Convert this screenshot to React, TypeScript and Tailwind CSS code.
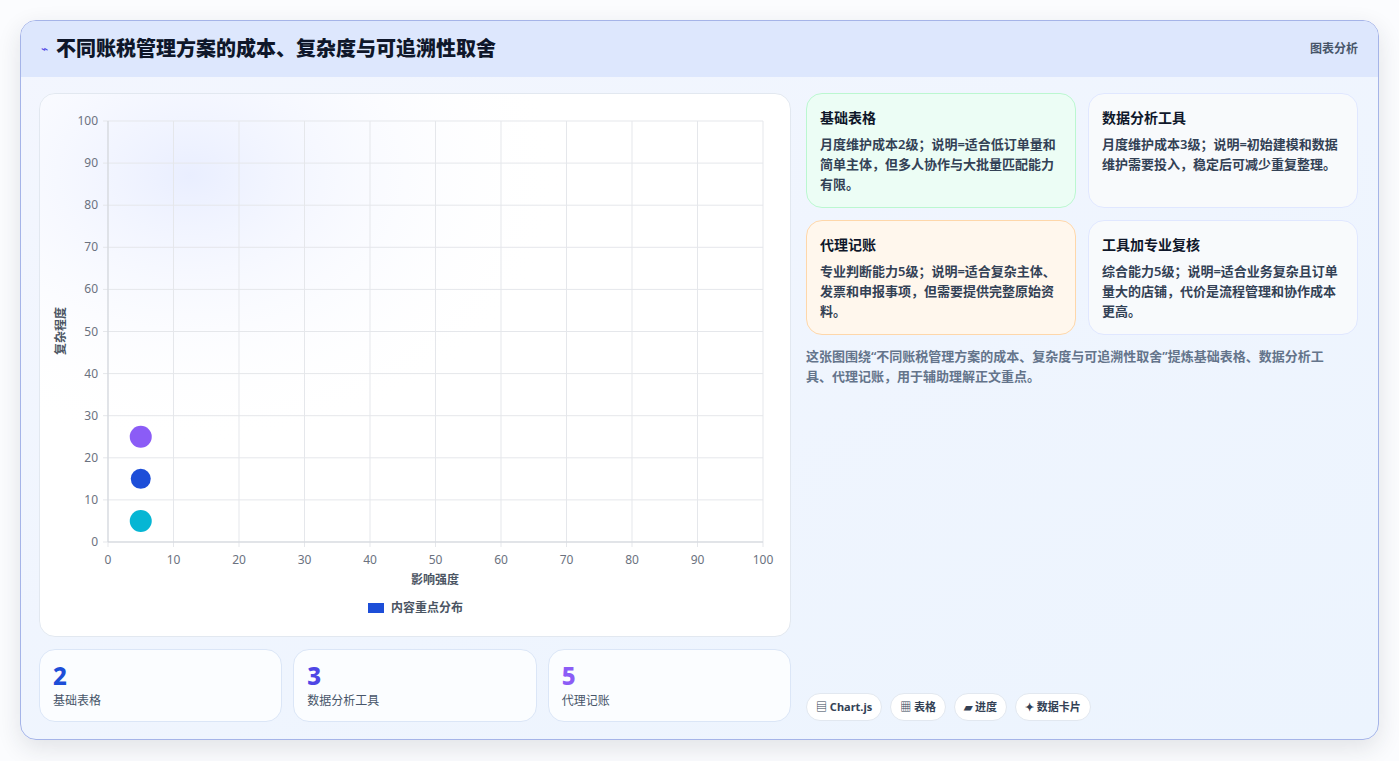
const font = { fontFamily: '"Noto Sans", "Noto Sans CJK SC", sans-serif' };

const ticks = [0, 10, 20, 30, 40, 50, 60, 70, 80, 90, 100];
// plot area in card coordinates
const L = 68, T = 27, W = 655, H = 421;
const px = (v: number) => L + (v / 100) * W;
const py = (v: number) => T + H - (v / 100) * H;

const points = [
  { x: 5, y: 25, r: 11, c: "#8b5cf6" },
  { x: 5, y: 15, r: 10, c: "#1d4ed8" },
  { x: 5, y: 5, r: 11, c: "#06b6d4" },
];

function Chart() {
  return (
    <svg width="750" height="543" viewBox="0 0 750 543" className="block">
      <defs>
        <radialGradient id="glow" cx="0.2" cy="0.15" r="0.5">
          <stop offset="0" stopColor="#e0e7ff" stopOpacity="0.7" />
          <stop offset="1" stopColor="#ffffff" stopOpacity="0" />
        </radialGradient>
      </defs>
      <rect x="0" y="0" width="750" height="543" fill="url(#glow)" />
      {ticks.map((t) => (
        <g key={t}>
          <line x1={px(t)} x2={px(t)} y1={T} y2={T + H + 5} stroke="#e5e7eb" />
          <line x1={L - 5} x2={L + W} y1={py(t)} y2={py(t)} stroke="#e5e7eb" />
          <text x={L - 10} y={py(t) + 4} textAnchor="end" fontSize="12" fill="#6b7280">{t}</text>
          <text x={px(t)} y={T + H + 22} textAnchor="middle" fontSize="12" fill="#6b7280">{t}</text>
        </g>
      ))}
      <line x1={L} x2={L} y1={T} y2={T + H} stroke="#d1d5db" />
      <line x1={L} x2={L + W} y1={T + H} y2={T + H} stroke="#d1d5db" />
      {points.map((p, i) => (
        <circle key={i} cx={px(p.x)} cy={py(p.y)} r={p.r} fill={p.c} />
      ))}
      <text x={395} y={490} textAnchor="middle" fontSize="12" fontWeight="700" fill="#4b5563">影响强度</text>
      <text transform="translate(25 237) rotate(-90)" textAnchor="middle" fontSize="12" fontWeight="700" fill="#4b5563">复杂程度</text>
      <rect x="328" y="509" width="16" height="10" fill="#1d4ed8" />
      <text x="351" y="518" fontSize="12" fontWeight="700" fill="#4b5563">内容重点分布</text>
    </svg>
  );
}

const cards = [
  { t: "基础表格", d: "月度维护成本2级；说明=适合低订单量和简单主体，但多人协作与大批量匹配能力有限。", cls: "bg-[#ecfdf5] border-[#bbf7d0]" },
  { t: "数据分析工具", d: "月度维护成本3级；说明=初始建模和数据维护需要投入，稳定后可减少重复整理。", cls: "bg-[#f8fafc] border-[#e0e7ff]" },
  { t: "代理记账", d: "专业判断能力5级；说明=适合复杂主体、发票和申报事项，但需要提供完整原始资料。", cls: "bg-[#fff7ed] border-[#fed7aa]" },
  { t: "工具加专业复核", d: "综合能力5级；说明=适合业务复杂且订单量大的店铺，代价是流程管理和协作成本更高。", cls: "bg-[#f8fafc] border-[#e0e7ff]" },
];

const stats = [
  { n: "2", l: "基础表格", c: "text-[#1d4ed8]" },
  { n: "3", l: "数据分析工具", c: "text-[#4f46e5]" },
  { n: "5", l: "代理记账", c: "text-[#8b5cf6]" },
];

const chips = ["▤ Chart.js", "▦ 表格", "▰ 进度", "✦ 数据卡片"];

export default function App() {
  return (
    <div className="w-[1399px] h-[761px] bg-[#fbfcfe] p-5" style={font}>
      <div className="h-[720px] rounded-2xl border border-[#a5b4e8] bg-gradient-to-br from-[#f3f6fe] to-[#ecf4fe] overflow-hidden shadow-[0_8px_24px_rgba(30,41,59,0.12)]">
        <div className="h-[56px] bg-[#dde7fd] flex items-center justify-between px-5">
          <div className="flex items-center gap-2">
            <span className="text-[#4f46e5] text-xs">⌁</span>
            <h1 className="text-[20px] font-extrabold text-[#0f172a]">不同账税管理方案的成本、复杂度与可追溯性取舍</h1>
          </div>
          <span className="text-xs font-semibold text-[#475569]">图表分析</span>
        </div>
        <div className="flex gap-[15px] pl-[18px] pr-5 pt-[16px]">
          <div className="w-[752px] flex flex-col gap-3">
            <div className="h-[544px] rounded-2xl bg-white border border-[#e2e8f0] overflow-hidden">
              <Chart />
            </div>
            <div className="grid grid-cols-3 gap-[11px]">
              {stats.map((s) => (
                <div key={s.n} className="h-[73px] rounded-2xl bg-[#fbfdff] border border-[#dbe6f7] px-[13px] pt-[12px]">
                  <div className={`text-[24px] leading-[28px] font-extrabold ${s.c}`}>{s.n}</div>
                  <div className="text-xs text-[#475569] mt-[3px]">{s.l}</div>
                </div>
              ))}
            </div>
          </div>
          <div className="w-[554px] flex flex-col h-[628px]">
            <div className="grid grid-cols-2 gap-3">
              {cards.map((c) => (
                <div key={c.t} className={`h-[115px] rounded-2xl border pl-[13px] pr-[16px] pt-[14px] ${c.cls}`}>
                  <div className="text-sm font-bold text-[#0f172a]">{c.t}</div>
                  <p className="mt-[6px] text-[13px] leading-[20px] font-semibold text-[#334155]">{c.d}</p>
                </div>
              ))}
            </div>
            <p className="mt-[11px] pr-4 text-[13px] leading-[20px] font-semibold text-[#64748b]">
              这张图围绕“不同账税管理方案的成本、复杂度与可追溯性取舍”提炼基础表格、数据分析工具、代理记账，用于辅助理解正文重点。
            </p>
            <div className="mt-auto flex gap-[8px]">
              {chips.map((c) => (
                <span key={c} className="h-[28px] px-[9px] rounded-full bg-white border border-[#e2e8f0] text-[11px] font-bold text-[#334155] flex items-center">{c}</span>
              ))}
            </div>
          </div>
        </div>
      </div>
    </div>
  );
}
